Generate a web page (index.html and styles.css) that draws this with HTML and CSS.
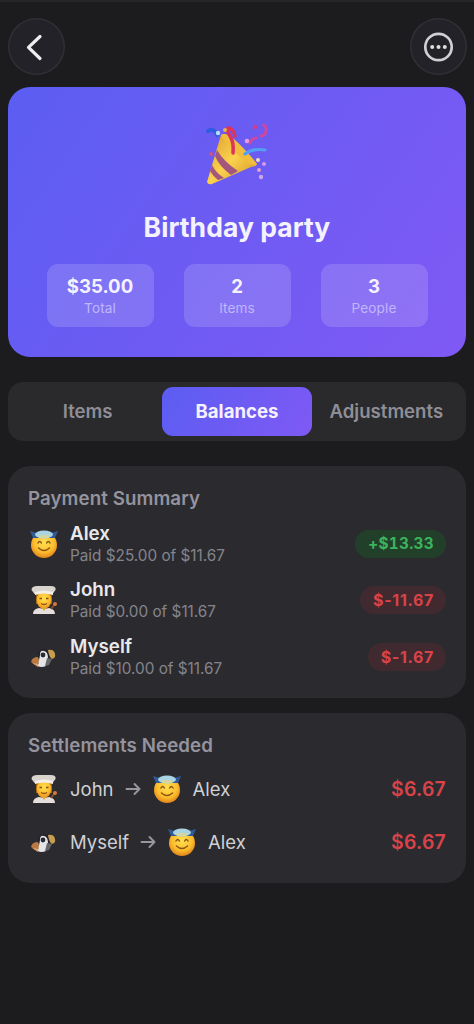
FILE: index.html
```html
<!DOCTYPE html>
<html lang="en">
<head>
<meta charset="utf-8">
<title>Birthday party</title>
<link rel="stylesheet" href="styles.css">
</head>
<body>
<svg class="defs" aria-hidden="true">
  <defs>
    <radialGradient id="skin" cx=".5" cy=".4" r=".6">
      <stop offset="0" stop-color="#ffe052"/><stop offset=".65" stop-color="#fdbd2c"/><stop offset="1" stop-color="#e0841c"/>
    </radialGradient>
    <linearGradient id="cone" x1="0" y1="0" x2="1" y2="1">
      <stop offset="0" stop-color="#d89a2c"/><stop offset=".5" stop-color="#fbd24e"/><stop offset="1" stop-color="#d08f20"/>
    </linearGradient>
  </defs>
  <symbol id="angel" viewBox="0 0 28 30">
    <circle cx="14" cy="16" r="13" fill="url(#skin)"/>
    <path d="M0 2l7 2 7-1 7 1 7-2-3 7H3z" fill="#315995"/>
    <ellipse cx="14" cy="5.500" rx="9" ry="4" fill="#a9d4e4"/>
    <ellipse cx="14" cy="7.500" rx="6" ry="1.600" fill="#d3d6a0"/>
    <path d="M8 14q1.700-3 3.400 0M16.600 14q1.700-3 3.400 0M8.500 19q5.500 5 11 0" fill="none" stroke="#8b5717" stroke-width="1.500" stroke-linecap="round"/>
  </symbol>
  <symbol id="cook" viewBox="0 0 28 30">
    <path d="M6 9h16v10H6z" fill="#9a611b"/>
    <ellipse cx="14" cy="15" rx="7.500" ry="9" fill="url(#skin)"/>
    <path d="M3 29q0-5 6-6l5 1 5-1q6 1 6 6z" fill="#e4dfdc"/>
    <path d="M11 22l3 4 3-4z" fill="#e9a42d"/>
    <path d="M1.500 5q0-4 6-4h13q6 0 5 4l-3 4q-9-2-18 0z" fill="#d9d3ce"/>
    <path d="M5 7q9-3 18 0v3q-9-3-18 0z" fill="#f3eee9"/>
    <path d="M9.500 13.500h2.500M16 13.500h2.500M11 18.500q3 2 6 0" fill="none" stroke="#8a4d18" stroke-width="1.300"/>
    <path d="M21 24l4-5" stroke="#8d4a22" stroke-width="2"/><circle cx="25" cy="19" r="2" fill="#d4793e"/>
  </symbol>
  <symbol id="bird" viewBox="0 0 28 30">
    <path d="M1 20q1-5 7-5l2 5-4 3z" fill="#b87944"/>
    <path d="M2 21l8 1-2 3z" fill="#e0a060"/>
    <path d="M8 10l5-3 7 1 3 6-5 2H8z" fill="#26242a"/>
    <path d="M10 13q0-5 4-4 4 1 4 7l-2 8q-5 2-8 0z" fill="#e3e5e9"/>
    <circle cx="13" cy="13" r="2.400" fill="#252930"/>
    <path d="M18 8q6-1 7 4 1 4-3 5-3-2-4-9z" fill="#c99d50"/>
    <path d="M17 16l5 1-3 6-4 1z" fill="#66666a"/>
  </symbol>
  <symbol id="arrow" viewBox="0 0 16 14">
    <path d="M1.500 7h13M9.500 2l5 5-5 5" fill="none" stroke="#98979e" stroke-width="1.900" stroke-linecap="round" stroke-linejoin="round"/>
  </symbol>
</svg>

<header class="topbar">
  <button class="round" aria-label="Back">
    <svg width="56" height="56" viewBox="0 0 56 56"><path d="M32 17.500L20.500 28.300 32 39.500" fill="none" stroke="#eeeeef" stroke-width="3.200" stroke-linecap="round" stroke-linejoin="round"/></svg>
  </button>
  <button class="round" aria-label="More">
    <svg width="56" height="56" viewBox="0 0 56 56"><circle cx="28.500" cy="28" r="13.200" fill="none" stroke="#d0d0d4" stroke-width="2.700"/><g fill="#dedee1"><circle cx="22.200" cy="28" r="2"/><circle cx="28.500" cy="28" r="2"/><circle cx="34.800" cy="28" r="2"/></g></svg>
  </button>
</header>

<section class="hero">
  <svg class="popper" width="64" height="64" viewBox="1 0 64 64">
    <path d="M3 59L17 12q5-4 17 8t19 21q-1 3-6 3L8 61q-4 1-5-2z" fill="url(#cone)"/>
    <path d="M17 12q5-4 17 8t19 21q-4 4-17-7T17 12z" fill="#f0bd3c"/>
    <path d="M13 27q7 12 21 21l-7 4Q15 43 11 33zM8 42q4 8 12 13l-6 2q-5-4-8-9z" fill="#a3577d"/>
    <path d="M29 30q1-11-3-17-4-6-2-8 5 0 7 8" fill="none" stroke="#db345d" stroke-width="3.500" stroke-linecap="round"/>
    <path d="M4 8q7-3 9 4" fill="none" stroke="#2e5de0" stroke-width="4" stroke-linecap="round"/>
    <path d="M41 31q8-6 20-4" fill="none" stroke="#53a0f3" stroke-width="3.200" stroke-linecap="round"/>
    <path d="M46 20q2-5 6-5M57 13q5-1 5-5 1-4-2-6" fill="none" stroke="#cb48a4" stroke-width="3.200" stroke-linecap="round"/>
    <circle cx="51" cy="4" r="2.200" fill="#cf3f8e"/><circle cx="14" cy="10" r="2.200" fill="#b9dcf5"/><circle cx="21" cy="7" r="2" fill="#e1b551"/>
    <circle cx="7" cy="31" r="2" fill="#c95280"/><circle cx="43" cy="18" r="2.300" fill="#e59bdc"/><circle cx="54" cy="37" r="2" fill="#f2ddb6"/>
    <circle cx="60" cy="41" r="2" fill="#d49be5"/><circle cx="55" cy="47" r="2" fill="#e0a1cc"/><circle cx="57" cy="54" r="2.200" fill="#c9a7ec"/>
  </svg>
  <h1 class="title">Birthday party</h1>
  <div class="stats">
    <div class="stat"><b>$35.00</b><span>Total</span></div>
    <div class="stat"><b>2</b><span>Items</span></div>
    <div class="stat"><b>3</b><span>People</span></div>
  </div>
</section>

<nav class="tabs">
  <a class="tab">Items</a>
  <a class="tab active">Balances</a>
  <a class="tab">Adjustments</a>
</nav>

<section class="card summary">
  <h2>Payment Summary</h2>
  <div class="person">
    <svg class="emoji"><use href="#angel"/></svg>
    <div class="who"><b>Alex</b><span>Paid $25.00 of $11.67</span></div>
    <span class="pill plus">+$13.33</span>
  </div>
  <div class="person">
    <svg class="emoji"><use href="#cook"/></svg>
    <div class="who"><b>John</b><span>Paid $0.00 of $11.67</span></div>
    <span class="pill">$-11.67</span>
  </div>
  <div class="person">
    <svg class="emoji"><use href="#bird"/></svg>
    <div class="who"><b>Myself</b><span>Paid $10.00 of $11.67</span></div>
    <span class="pill">$-1.67</span>
  </div>
</section>

<section class="card settle">
  <h2>Settlements Needed</h2>
  <div class="transfer">
    <svg class="emoji"><use href="#cook"/></svg><span>John</span>
    <svg class="arrow"><use href="#arrow"/></svg>
    <svg class="emoji"><use href="#angel"/></svg><span>Alex</span>
    <b>$6.67</b>
  </div>
  <div class="transfer">
    <svg class="emoji"><use href="#bird"/></svg><span>Myself</span>
    <svg class="arrow"><use href="#arrow"/></svg>
    <svg class="emoji"><use href="#angel"/></svg><span>Alex</span>
    <b>$6.67</b>
  </div>
</section>
</body>
</html>
```

FILE: styles.css
```css
* { box-sizing: border-box; }
body {
  margin: 0;
  height: 1024px;
  padding: 16px 8px 0;
  border-top: 2px solid #252528;
  background: #1c1c1e;
  color: #e9e9ec;
  font-family: Inter, "Liberation Sans", sans-serif;
  overflow: hidden;
}
h1, h2 { margin: 0; }
svg { display: block; flex: none; }
.defs { position: absolute; width: 0; height: 0; }

.topbar { display: flex; justify-content: space-between; height: 56px; margin-right: -1px; }
.round {
  width: 57px;
  height: 57px;
  padding: 0;
  border: 0;
  border-radius: 50%;
  background: #222228;
  box-shadow: inset 0 0 0 1.5px #2f2f34;
}

.hero {
  height: 270px;
  margin-top: 13px;
  padding-top: 36px;
  border-radius: 22px;
  background: linear-gradient(125deg, #5b5df2, #8059f4);
  display: flex;
  flex-direction: column;
  align-items: center;
}
.title { margin-top: 23px; font-size: 26.500px; line-height: 34px; font-weight: 700; letter-spacing: .05px; color: #f5f2ff; white-space: nowrap; }
.stats { display: flex; gap: 30px; margin-top: 20px; }
.stat {
  width: 107px;
  height: 63px;
  padding-top: 10px;
  border-radius: 11px;
  background: rgba(255, 255, 255, .15);
  text-align: center;
}
.stat b { display: block; font-size: 18.600px; line-height: 24px; font-weight: 700; color: #f5f2ff; }
.stat span { display: block; font-size: 13.600px; line-height: 20px; letter-spacing: .1px; color: #c0b6fb; }

.tabs {
  display: flex;
  height: 59px;
  margin-top: 25px;
  padding: 5px;
  border-radius: 15px;
  background: #2a2a2d;
}
.tab {
  flex: 1;
  display: flex;
  align-items: center;
  justify-content: center;
  padding-bottom: 1px;
  border-radius: 11px;
  font-size: 18.600px;
  font-weight: 600;
  color: #8f8e96;
}
.tab.active { background: linear-gradient(125deg, #5b5df2, #7f59f4); color: #f5f2ff; font-weight: 700; }

.card { border-radius: 22px; background: #2b2b2f; padding: 0 20px; }
.card h2 { font-size: 18.700px; line-height: 24px; font-weight: 600; letter-spacing: .1px; color: #95949e; white-space: nowrap; }
.emoji { width: 28px; height: 30px; }

.summary { height: 232px; margin-top: 25px; padding-top: 21px; }
.summary h2 { margin-bottom: 5px; }
.person { display: flex; align-items: center; height: 56.300px; padding-left: 2px; }
.who { flex: 1; margin-left: 12px; padding-top: 2px; }
.who b { display: block; font-size: 18.800px; line-height: 22px; font-weight: 600; }
.who span { display: block; font-size: 15.300px; line-height: 22px; color: #85848c; }
.pill {
  height: 28px;
  padding: 0 12px 0 13px;
  border-radius: 14px;
  background: #402a2f;
  color: #d8434a;
  font-size: 16px;
  line-height: 28px;
  font-weight: 700;
  letter-spacing: .65px;
}
.pill.plus {
  background: #224029;
  color: #3bb45d;
  font-size: 15.300px;
  font-variant-numeric: tabular-nums;
  letter-spacing: .3px;
}

.settle { height: 170px; margin-top: 15px; padding-top: 21px; }
.settle h2 { margin-bottom: 4px; }
.transfer { display: flex; align-items: center; height: 53.500px; padding-left: 2px; font-size: 18.500px; color: #d0d0d4; }
.transfer span { margin-left: 12px; }
.arrow { width: 16px; height: 14px; margin: 0 12px 0 11px; }
.transfer b { margin-left: auto; color: #d8434a; font-size: 19.400px; font-weight: 600; letter-spacing: .25px; }
```
